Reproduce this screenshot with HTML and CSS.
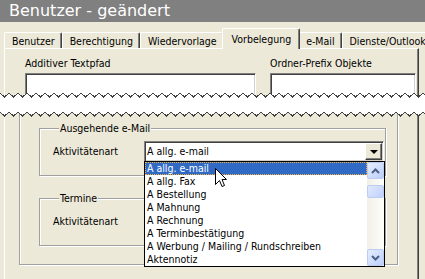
FILE: index.html
```html
<!DOCTYPE html>
<html lang="de">
<head>
    <meta charset="UTF-8">
    <title>Benutzer - geändert</title>
    <link rel="stylesheet" href="styles.css">
</head>
<body>

    <div class="titlebar">Benutzer - geändert</div>

    <div class="tabs">
        <div class="tab">Benutzer</div>
        <div class="tab">Berechtigung</div>
        <div class="tab">Wiedervorlage</div>
        <div class="tab tab-active">Vorbelegung</div>
        <div class="tab">e-Mail</div>
        <div class="tab">Dienste/Outlook</div>
    </div>

    <div class="panel">
        <div class="panel-upper">
            <div class="field field-path">
                <label>Additiver Textpfad</label>
                <div class="textbox"></div>
            </div>
            <div class="field field-prefix">
                <label>Ordner-Prefix Objekte</label>
                <div class="textbox"></div>
            </div>
        </div>

        <div class="panel-lower">
            <div class="frame">
                <fieldset class="group">
                    <legend>Ausgehende e-Mail</legend>
                    <div class="row">
                        <span class="row-label">Aktivitätenart</span>
                        <div class="combo">
                            <span class="combo-text">A allg. e-mail</span>
                            <span class="combo-button"><span class="arrow-down"></span></span>
                        </div>
                    </div>
                </fieldset>
                <fieldset class="group group-next">
                    <legend>Termine</legend>
                    <div class="row">
                        <span class="row-label">Aktivitätenart</span>
                        <div class="combo">
                            <span class="combo-text"></span>
                            <span class="combo-button"><span class="arrow-down"></span></span>
                        </div>
                    </div>
                </fieldset>
            </div>
        </div>
    </div>

    <!-- torn edge over the skipped part of the dialog -->
    <svg class="tear" width="425" height="30" viewBox="0 0 425 30">
        <defs>
            <pattern id="zigzag" width="9" height="30" patternUnits="userSpaceOnUse">
                <path d="M0 3 L4.5 7 L9 3 L9 22 L4.5 26 L0 22 Z" fill="#fff"/>
                <path d="M0 3 L4.5 7 L9 3 M0 22 L4.5 26 L9 22" fill="none" stroke="#404040" stroke-width="1" shape-rendering="crispEdges"/>
            </pattern>
        </defs>
        <rect width="425" height="30" fill="url(#zigzag)"/>
    </svg>

    <div class="dropdown">
        <ul class="options">
            <li class="selected">A allg. e-mail</li>
            <li>A allg. Fax</li>
            <li>A Bestellung</li>
            <li>A Mahnung</li>
            <li>A Rechnung</li>
            <li>A Terminbestätigung</li>
            <li>A Werbung / Mailing / Rundschreiben</li>
            <li>Aktennotiz</li>
        </ul>
        <div class="scrollbar">
            <div class="sb-btn">
                <svg width="9" height="6" viewBox="0 0 9 6"><path d="M1 5 L4.5 1.5 L8 5" fill="none" stroke="#4d6185" stroke-width="2"/></svg>
            </div>
            <div class="sb-thumb"></div>
            <div class="sb-btn sb-down">
                <svg width="9" height="6" viewBox="0 0 9 6"><path d="M1 1 L4.5 4.5 L8 1" fill="none" stroke="#4d6185" stroke-width="2"/></svg>
            </div>
        </div>
    </div>

    <svg class="cursor" width="13" height="21" viewBox="0 0 13 21">
        <path d="M0.5 0.5 V16.5 L4.5 12.5 L7 18.5 L9.5 17.5 L7 11.5 H11.5 Z" fill="#fff" stroke="#000" stroke-width="1"/>
    </svg>

</body>
</html>
```

FILE: styles.css
```css
* {
    margin: 0;
    padding: 0;
    box-sizing: border-box;
}

body {
    position: relative;
    width: 425px;
    height: 279px;
    overflow: hidden;
    background: #ece9d8;
    color: #000;
    font-family: "DejaVu Sans Condensed", "DejaVu Sans", sans-serif;
    font-stretch: condensed;
    font-size: 10.5px;
    line-height: 13px;
}

.titlebar {
    height: 22px;
    padding-left: 9px;
    background: #808080;
    color: #fff;
    font-family: "DejaVu Sans", sans-serif;
    font-stretch: normal;
    font-size: 16px;
    line-height: 22px;
}

/* tab strip */
.tabs {
    display: flex;
    align-items: flex-end;
    height: 26px;
    padding-left: 4px;
    white-space: nowrap;
}

.tab {
    flex-shrink: 0;
    height: 16px;
    padding: 2px 6px 0 7px;
    border-top: 1px solid #fff;
    border-left: 1px solid #fff;
    border-right: 1px solid #404040;
    border-radius: 2px 2px 0 0;
    box-shadow: inset -1px 0 #808080;
}

.tab-active {
    position: relative;
    z-index: 1;
    height: 21px;
    margin: 0 -2px -1px;
    padding: 4px 8px 0 9px;
    background: #ece9d8;
}

/* page of the tab control */
.panel {
    width: 415px;
    height: 231px;
    margin-left: 4px;
    border-top: 1px solid #fff;
    border-left: 1px solid #fff;
    border-right: 1px solid #404040;
    box-shadow: inset -1px 0 #808080;
}

.panel-upper {
    display: flex;
    gap: 14px;
    height: 52px;
    padding: 8px 0 0 20px;
    overflow: hidden;
}

.field-path {
    width: 231px;
}

.field-prefix {
    width: 146px;
}

.field label {
    display: block;
}

.textbox {
    height: 30px;
    margin-top: 3px;
    background: #fff;
    border-top: 1px solid #808080;
    border-left: 1px solid #808080;
    border-bottom: 1px solid #fff;
    border-right: 1px solid #fff;
    box-shadow: inset 1px 1px #404040, inset -1px -1px #d4d0c8;
}

.panel-lower {
    padding-left: 14px;
}

.frame {
    width: 379px;
    height: 164px;
    padding: 21px 0 0 19px;
    border: 1px solid #a0a0a0;
    border-top: none;
    box-shadow: 1px 1px 0 #fff, inset 1px 0 0 #fff;
}

.group {
    width: 347px;
    padding: 7px 0 13px 13px;
    border: 1px solid #a0a0a0;
    box-shadow: 1px 1px 0 #fff, inset 1px 1px 0 #fff;
}

.group legend {
    margin-left: 6px;
    padding: 0 1px;
    line-height: 12px;
    background: #ece9d8;
}

.group-next {
    margin-top: 16px;
}

.row {
    display: flex;
    align-items: center;
}

.row-label {
    width: 91px;
}

.combo {
    display: flex;
    align-items: center;
    width: 240px;
    height: 21px;
    padding: 0 1px 0 2px;
    background: #fff;
    border-top: 1px solid #808080;
    border-left: 1px solid #808080;
    border-bottom: 1px solid #fff;
    border-right: 1px solid #fff;
    box-shadow: inset 1px 1px #404040, inset -1px -1px #d4d0c8;
}

.combo-text {
    flex: 1;
}

.combo-button {
    display: flex;
    align-items: center;
    justify-content: center;
    width: 17px;
    height: 17px;
    background: #ece9d8;
    border: 1px solid;
    border-color: #fff #404040 #404040 #fff;
    box-shadow: inset -1px -1px #808080;
}

.arrow-down {
    width: 0;
    height: 0;
    border-left: 4px solid transparent;
    border-right: 4px solid transparent;
    border-top: 4px solid #000;
}

/* overlays */
.tear {
    position: absolute;
    left: 0;
    top: 90px;
}

.dropdown {
    position: absolute;
    left: 144px;
    top: 161px;
    display: flex;
    width: 241px;
    height: 106px;
    background: #fff;
    border: 1px solid #000;
}

.options {
    flex: 1;
    list-style: none;
}

.options li {
    height: 13px;
    padding-left: 2px;
    white-space: nowrap;
}

.options .selected {
    background: #316ac5;
    color: #fff;
    outline: 1px dotted #f2b03c;
    outline-offset: -1px;
}

.scrollbar {
    display: flex;
    flex-direction: column;
    width: 17px;
    background: linear-gradient(90deg, #f1efe6, #fefefd);
}

.sb-btn {
    display: flex;
    align-items: center;
    justify-content: center;
    height: 17px;
    border: 1px solid #bccdf3;
    border-radius: 2px;
    background: linear-gradient(135deg, #e6eefe, #bccefa);
}

.sb-thumb {
    height: 13px;
    margin-top: 6px;
    border: 1px solid #bccdf3;
    border-radius: 2px;
    background: linear-gradient(135deg, #e0e9fe, #bfd0fb);
}

.sb-down {
    margin-top: auto;
}

.cursor {
    position: absolute;
    left: 215px;
    top: 168px;
}
```
